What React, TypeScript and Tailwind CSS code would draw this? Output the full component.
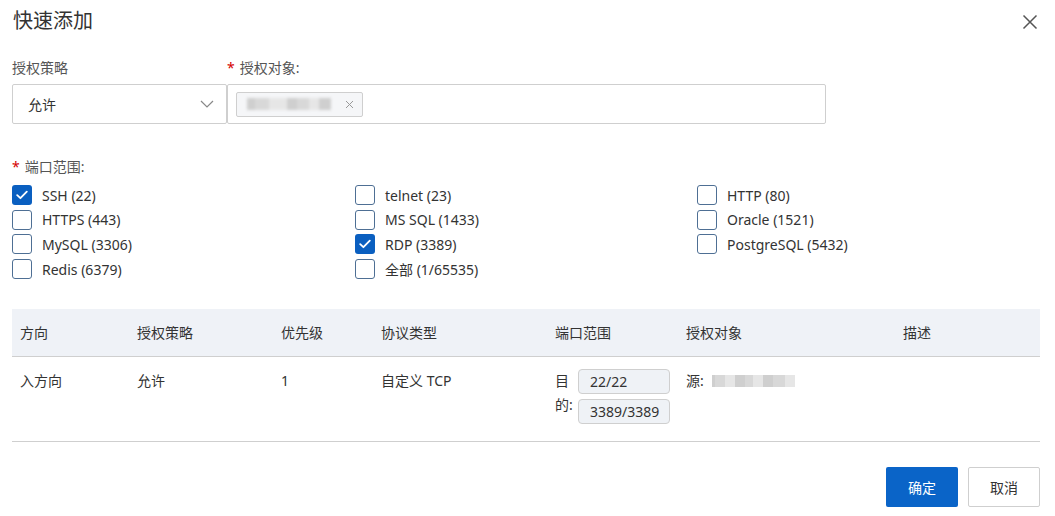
import React from "react";

const font = { fontFamily: '"Noto Sans", "Noto Sans CJK SC", sans-serif' };

type Port = { label: string; checked?: boolean };

const ports: Port[][] = [
  [
    { label: "SSH (22)", checked: true },
    { label: "HTTPS (443)" },
    { label: "MySQL (3306)" },
    { label: "Redis (6379)" },
  ],
  [
    { label: "telnet (23)" },
    { label: "MS SQL (1433)" },
    { label: "RDP (3389)", checked: true },
    { label: "全部 (1/65535)" },
  ],
  [{ label: "HTTP (80)" }, { label: "Oracle (1521)" }, { label: "PostgreSQL (5432)" }],
];

function Check({ checked }: { checked?: boolean }) {
  return checked ? (
    <span className="flex h-[20px] w-[20px] items-center justify-center rounded-[3px] bg-[#0a5fc0]">
      <svg width="12" height="10" viewBox="0 0 12 10" fill="none">
        <path d="M1.2 5.2 L4.4 8.2 L10.8 1.6" stroke="#fff" strokeWidth="1.8" strokeLinecap="round" strokeLinejoin="round" />
      </svg>
    </span>
  ) : (
    <span className="h-[20px] w-[20px] rounded-[3px] border border-[#4e6f94] bg-white" />
  );
}

function Blur({ widths }: { widths: number[] }) {
  return (
    <div className="flex items-center">
      {widths.map((w, i) => (
        <span
          key={i}
          className={i % 3 === 1 ? "h-[12px] bg-[#d8d8d8]" : i % 3 === 2 ? "h-[12px] bg-[#e6e6e6]" : "h-[12px] bg-[#cfcfcf]"}
          style={{ width: w }}
        />
      ))}
    </div>
  );
}

const cols = "grid-cols-[117px_144px_100px_174px_131px_217px_1fr]";

export default function App() {
  return (
    <div className="relative h-[516px] w-[1055px] overflow-hidden bg-white text-[#333]" style={font}>
      {/* dialog header */}
      <div className="flex h-[44px] items-start justify-between pl-[13px] pr-[17px] pt-[6px]">
        <h1 className="text-[20px] leading-[30px] text-[#333]">快速添加</h1>
        <svg className="mt-[8px]" width="16" height="16" viewBox="0 0 16 16" fill="none">
          <path d="M1.5 1.5 L14.5 14.5 M14.5 1.5 L1.5 14.5" stroke="#555" strokeWidth="1.5" />
        </svg>
      </div>

      <div className="pl-[12px] pr-[15px]">
        {/* policy + target */}
        <div className="flex">
          <div className="w-[215px]">
            <div className="h-[40px] pt-[14px] text-[14px] leading-[20px] text-[#555]">授权策略</div>
            <div className="flex h-[40px] items-center justify-between rounded-[2px] border border-[#cfcfcf] pl-[15px] pr-[12px] text-[14px]">
              <span>允许</span>
              <svg width="14" height="8" viewBox="0 0 14 8" fill="none">
                <path d="M1 1 L7 7 L13 1" stroke="#888" strokeWidth="1.2" />
              </svg>
            </div>
          </div>
          <div className="w-[599px]">
            <div className="flex h-[40px] items-center pt-[8px] text-[14px] leading-[20px] text-[#555]">
              <span className="mr-[5px] text-[#d40000]">*</span>授权对象:
            </div>
            <div className="flex h-[40px] items-center rounded-[2px] border border-[#cfcfcf] px-[8px]">
              <div className="flex h-[25px] w-[127px] items-center justify-between rounded-[2px] border border-[#cfcfcf] bg-[#f5f6f8] pl-[10px] pr-[8px]">
                <div className="blur-[1.5px]">
                  <Blur widths={[8, 14, 18, 10, 12, 10, 12]} />
                </div>
                <svg width="9" height="9" viewBox="0 0 9 9" fill="none">
                  <path d="M1 1 L8 8 M8 1 L1 8" stroke="#999" strokeWidth="1" />
                </svg>
              </div>
            </div>
          </div>
        </div>

        {/* port range */}
        <div className="mt-[32px] flex h-[20px] items-center text-[14px] text-[#555]">
          <span className="mr-[5px] text-[#d40000]">*</span>端口范围:
        </div>
        <div className="mt-[7px] grid grid-cols-[343px_342px_1fr]">
          {ports.map((col, ci) => (
            <div key={ci} className="flex flex-col">
              {col.map((p) => (
                <label key={p.label} className="flex h-[24.6px] items-center gap-[10px] text-[14px] text-[#333]">
                  <Check checked={p.checked} />
                  <span>{p.label}</span>
                </label>
              ))}
            </div>
          ))}
        </div>

        {/* preview table */}
        <div className="mt-[28px] w-[1028px] text-[14px]">
          <div className={`grid h-[48px] ${cols} items-center border-b border-[#cfcfcf] bg-[#eff2f7] pl-[8px]`}>
            <span>方向</span>
            <span>授权策略</span>
            <span>优先级</span>
            <span>协议类型</span>
            <span>端口范围</span>
            <span>授权对象</span>
            <span>描述</span>
          </div>
          <div className={`grid h-[85px] ${cols} items-start border-b border-[#cfcfcf] pl-[8px] pt-[13px]`}>
            <span className="leading-[22px]">入方向</span>
            <span className="leading-[22px]">允许</span>
            <span className="leading-[22px]">1</span>
            <span className="leading-[22px]">自定义 TCP</span>
            <div className="flex gap-[6px]">
              <div className="flex w-[17px] flex-col leading-[22px]">
                <span>目</span>
                <span className="mt-[2px] whitespace-nowrap">的:</span>
              </div>
              <div className="-mt-[1px] flex flex-col gap-[5px]">
                <span className="flex h-[25px] w-[92px] items-center rounded-[4px] border border-[#cfcfcf] bg-[#eff2f6] pl-[11px]">22/22</span>
                <span className="flex h-[25px] w-[92px] items-center rounded-[4px] border border-[#cfcfcf] bg-[#eff2f6] pl-[11px]">3389/3389</span>
              </div>
            </div>
            <div className="flex items-center leading-[22px]">
              <span>源:</span>
              <span className="ml-[8px] blur-[0.4px]">
                <Blur widths={[3, 10, 10, 10, 8, 10, 10, 12, 10]} />
              </span>
            </div>
            <span />
          </div>
        </div>

        {/* footer buttons */}
        <div className="mt-[25px] flex justify-end gap-[10px]">
          <button className="h-[40px] w-[72px] rounded-[2px] bg-[#0a64c8] text-[14px] text-white">确定</button>
          <button className="h-[40px] w-[72px] rounded-[2px] border border-[#cfcfcf] bg-white text-[14px] text-[#333]">取消</button>
        </div>
      </div>
    </div>
  );
}
